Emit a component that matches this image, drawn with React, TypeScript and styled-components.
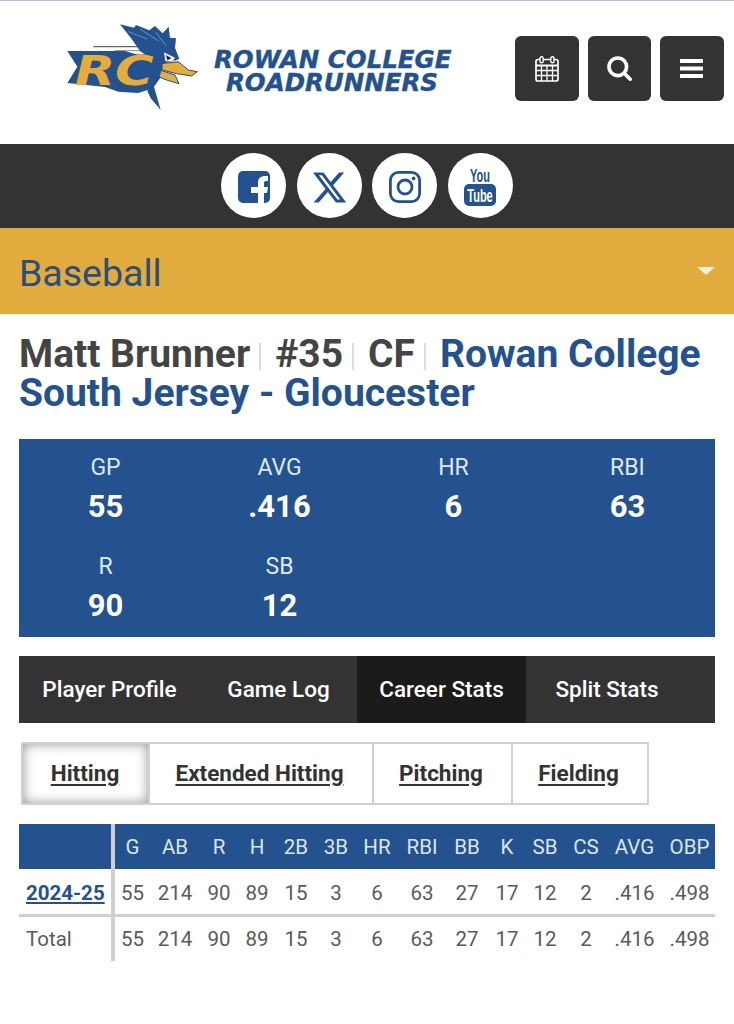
import styled, { createGlobalStyle } from "styled-components"
import { FaXTwitter } from "react-icons/fa6"

const BLUE = "#23528f"
const DARK = "#333333"

const GlobalStyle = createGlobalStyle`
  html, body {
    margin: 0;
    background: #fff;
    font-family: Roboto, "Liberation Sans", sans-serif;
  }
  * { box-sizing: border-box; }
`

const Page = styled.div`
  width: 734px;
  height: 1024px;
  overflow: hidden;
  border-top: 1px solid #b4bdc8;
`

const Header = styled.header`
  height: 143px;
  display: flex;
  align-items: flex-start;
`

const Brand = styled.div`
  display: flex;
  align-items: flex-start;
  margin: 14px 0 0 60px;
  width: 455px;
`

const WordMark = styled.div`
  margin: 33px 0 0 9px;
  width: 236px;
  text-align: center;
  color: ${BLUE};
  font-family: "DejaVu Sans", sans-serif;
  font-weight: 700;
  font-style: italic;
  font-size: 24.5px;
  line-height: 23px;
  white-space: nowrap;
  -webkit-text-stroke: 0.4px ${BLUE};
`

const HeaderButtons = styled.div`
  display: flex;
  gap: 9px;
  margin-top: 35px;
`

const SquareButton = styled.button`
  width: 63.6px;
  height: 65px;
  padding: 0;
  border: 0;
  border-radius: 6px;
  background: ${DARK};
  color: #fff;
  display: flex;
  align-items: center;
  justify-content: center;
`

const SocialBar = styled.div`
  height: 84px;
  background: ${DARK};
  display: flex;
  justify-content: center;
  align-items: flex-start;
  gap: 10.67px;
  padding-top: 9px;
`

const SocialLink = styled.a`
  width: 65px;
  height: 65px;
  padding-top: 3px;
  border-radius: 50%;
  background: #fff;
  color: ${BLUE};
  font-size: 37px;
  display: flex;
  align-items: center;
  justify-content: center;
`

const SportBar = styled.div`
  height: 86px;
  padding: 4px 19px 0;
  background: #e2ab3e;
  color: #2a4f7c;
  font-size: 37.5px;
  display: flex;
  align-items: center;
  justify-content: space-between;
`

const Caret = styled.span`
  width: 0;
  height: 0;
  margin-top: -4px;
  border-left: 9px solid transparent;
  border-right: 9px solid transparent;
  border-top: 8px solid #f5efe0;
`

const Content = styled.main`
  padding: 21px 19px 0;
`

const Title = styled.h1`
  margin: 0;
  font-size: 39px;
  line-height: 39px;
  font-weight: 700;
  color: #444;
`

const Pipe = styled.span`
  display: inline-block;
  width: 2px;
  height: 27px;
  margin: 0 14px 0 9px;
  background: #dcdcdc;
  vertical-align: -3px;
`

const School = styled.span`
  color: ${BLUE};
`

const StatBox = styled.section`
  margin-top: 26px;
  height: 198px;
  background: ${BLUE};
  display: grid;
  grid-template-columns: 173px 175px 173px 175px;
  grid-auto-rows: 99px;
  padding-top: 15px;
  color: #fff;
  text-align: center;
`

const StatLabel = styled.div`
  font-size: 23px;
  line-height: 27px;
  color: #dfe7f2;
`

const StatValue = styled.div`
  font-size: 31px;
  line-height: 40px;
  font-weight: 700;
  margin-top: 6px;
`

const Tabs = styled.nav`
  margin-top: 19px;
  height: 67px;
  background: ${DARK};
  display: flex;
`

const Tab = styled.a<{ $active?: boolean; $width: number }>`
  width: ${(p) => p.$width}px;
  padding-bottom: 2px;
  display: flex;
  align-items: center;
  justify-content: center;
  background: ${(p) => (p.$active ? "#1b1b1b" : "transparent")};
  color: #fff;
  font-size: 22.5px;
  font-weight: 500;
`

const SubTabs = styled.div`
  margin: 19px 0 0 2px;
  display: inline-flex;
  height: 63px;
  border: 2px solid #d0d0d0;
`

const SubTab = styled.a<{ $active?: boolean; $width: number }>`
  width: ${(p) => p.$width}px;
  padding: 0 ${(p) => (p.$active ? "1px" : "3px")} 2px 0;
  display: flex;
  align-items: center;
  justify-content: center;
  color: #333;
  font-size: 22.5px;
  font-weight: 700;
  text-decoration: underline;
  text-underline-offset: 3px;
  border-left: ${(p) => (p.$active ? "0" : "2px solid #d0d0d0")};
  box-shadow: ${(p) => (p.$active ? "inset 0 0 12px rgba(0, 0, 0, 0.42)" : "none")};
  &:first-child { border-left: 0; }
`

const StatsTable = styled.table`
  margin-top: 19px;
  width: 696px;
  border-collapse: collapse;
  table-layout: fixed;
  font-size: 20.5px;
  color: #5a5a5a;
  text-align: center;

  th {
    height: 45px;
    padding: 0;
    background: ${BLUE};
    color: #dbe6f3;
    font-weight: 400;
  }
  td {
    height: 46px;
    padding: 0;
  }
  tbody tr:first-child td {
    padding-top: 3px;
    border-bottom: 3px solid #d0d0d0;
  }
  th:first-child, td:first-child {
    border-right: 4px solid #cfcfcf;
    text-align: left;
    padding-left: 7px;
  }
  th:last-child, td:last-child {
    padding-left: 3px;
  }
`

const SeasonLink = styled.a`
  color: ${BLUE};
  font-weight: 700;
  text-decoration: underline;
`

function Logo() {
  return (
    <svg width="145" height="100" viewBox="0 0 435 300">
      <path d="M100 95 H235" stroke="#666" strokeWidth="4" />
      <path d="M165 107 H262 M190 118 H266" stroke="#888" strokeWidth="3" />
      <path d="M180 28 L222 38 L228 30 L268 46 L285 33 L308 55 L326 35 L330 68 L348 70 L345 98 L358 132 L335 140 L310 145 L300 190 L282 215 L302 285 L272 250 L262 228 L285 175 L285 140 L240 108 L215 72 Z" fill={BLUE} />
      <path d="M205 50 L262 72 M240 42 L296 78 M286 50 L318 92" stroke="#6c8fbe" strokeWidth="3" fill="none" />
      <path d="M312 112 L345 128 L338 140 L316 138 Z" fill="#f2f2f2" />
      <path d="M318 120 L334 130 L322 136 Z" fill="#222" />
      <path d="M306 146 L355 140 L385 165 L412 170 L395 183 L350 176 L306 165 Z" fill="#e5ab3c" stroke="#2f4f6f" strokeWidth="3" />
      <path d="M302 166 L345 180 L357 206 L322 196 L298 186 Z" fill="#d9b24f" stroke="#2f4f6f" strokeWidth="3" />
      <path d="M22 108 L195 108 L285 135 L297 175 L272 222 L235 234 L175 230 L135 216 L22 204 L52 155 Z" fill={BLUE} />
      <text transform="translate(44 210) scale(1.27 1)" fontFamily="DejaVu Sans" fontWeight="700" fontStyle="italic" fontSize="124" fill="#e5ab3c">RC</text>
    </svg>
  )
}

function CalendarIcon() {
  return (
    <svg width="24" height="26" viewBox="0 0 24 26" fill="none" stroke="#fff">
      <rect x="1" y="3.5" width="22" height="21.5" rx="2" strokeWidth="1.7" />
      <path d="M1 9.5 H23" strokeWidth="2" />
      <path d="M1 14.5 H23 M1 19.5 H23 M6.5 9.5 V25 M12 9.5 V25 M17.5 9.5 V25" strokeWidth="1.3" />
      <rect x="5" y="0.8" width="3.2" height="6" rx="1.6" fill={DARK} strokeWidth="1.4" />
      <rect x="15.8" y="0.8" width="3.2" height="6" rx="1.6" fill={DARK} strokeWidth="1.4" />
    </svg>
  )
}

function SearchIcon() {
  return (
    <svg width="25" height="25" viewBox="0 0 25 25" fill="none" stroke="#fff" strokeWidth="3.6">
      <circle cx="10.8" cy="10.8" r="8.8" />
      <path d="M17.5 17.5 L23.2 23.2" strokeLinecap="round" />
    </svg>
  )
}

function BarsIcon() {
  return (
    <svg width="23" height="19" viewBox="0 0 23 19" fill="#fff">
      <rect width="23" height="4" rx="0.5" />
      <rect y="7.5" width="23" height="4" rx="0.5" />
      <rect y="15" width="23" height="4" rx="0.5" />
    </svg>
  )
}

function FacebookIcon() {
  return (
    <svg width="32" height="32" viewBox="0 0 32 32">
      <rect width="32" height="32" rx="5" fill={BLUE} />
      <path d="M20 32 V22 H13 V16 H20 V12 C20 7 23 5 27 5 H30 V10 H28 C26.5 10 26 11 26 12 V16 H30 L29 22 H26 V32 Z" fill="#fff" />
    </svg>
  )
}

function InstagramIcon() {
  return (
    <svg width="32" height="32" viewBox="0 0 32 32" fill="none" stroke={BLUE} strokeWidth="2.8">
      <rect x="1.4" y="1.4" width="29.2" height="29.2" rx="8" />
      <circle cx="16" cy="16" r="7" />
      <circle cx="24.6" cy="7.4" r="1.9" fill={BLUE} stroke="none" />
    </svg>
  )
}

function YoutubeIcon() {
  return (
    <svg width="32" height="46" viewBox="0 -4 32 46" fontFamily="Liberation Sans" fontWeight="700" textAnchor="middle">
      <text transform="translate(16 14) scale(0.58 1)" fontSize="19" fill={BLUE}>You</text>
      <rect y="16" width="32" height="22" rx="5" fill={BLUE} />
      <text transform="translate(16 33.5) scale(0.58 1)" fontSize="19" fill="#fff">Tube</text>
    </svg>
  )
}

const columns = ["G", "AB", "R", "H", "2B", "3B", "HR", "RBI", "BB", "K", "SB", "CS", "AVG", "OBP"]
const values = ["55", "214", "90", "89", "15", "3", "6", "63", "27", "17", "12", "2", ".416", ".498"]
const widths = [37, 50, 38, 38, 40, 40, 42, 48, 42, 38, 38, 44, 53, 54]

const stats = [
  ["GP", "55"],
  ["AVG", ".416"],
  ["HR", "6"],
  ["RBI", "63"],
  ["R", "90"],
  ["SB", "12"],
]

export default function App() {
  return (
    <Page>
      <GlobalStyle />
      <Header>
        <Brand>
          <Logo />
          <WordMark>
            ROWAN COLLEGE
            <br />
            ROADRUNNERS
          </WordMark>
        </Brand>
        <HeaderButtons>
          <SquareButton><CalendarIcon /></SquareButton>
          <SquareButton><SearchIcon /></SquareButton>
          <SquareButton><BarsIcon /></SquareButton>
        </HeaderButtons>
      </Header>
      <SocialBar>
        <SocialLink><FacebookIcon /></SocialLink>
        <SocialLink><FaXTwitter /></SocialLink>
        <SocialLink><InstagramIcon /></SocialLink>
        <SocialLink><YoutubeIcon /></SocialLink>
      </SocialBar>
      <SportBar>
        Baseball
        <Caret />
      </SportBar>
      <Content>
        <Title>
          Matt Brunner<Pipe />#35<Pipe />CF<Pipe />
          <School>Rowan College South Jersey - Gloucester</School>
        </Title>
        <StatBox>
          {stats.map(([label, value]) => (
            <div key={label}>
              <StatLabel>{label}</StatLabel>
              <StatValue>{value}</StatValue>
            </div>
          ))}
        </StatBox>
        <Tabs>
          <Tab $width={181}>Player Profile</Tab>
          <Tab $width={157}>Game Log</Tab>
          <Tab $width={169} $active>Career Stats</Tab>
          <Tab $width={162}>Split Stats</Tab>
        </Tabs>
        <SubTabs>
          <SubTab $width={125} $active>Hitting</SubTab>
          <SubTab $width={224}>Extended Hitting</SubTab>
          <SubTab $width={139}>Pitching</SubTab>
          <SubTab $width={136}>Fielding</SubTab>
        </SubTabs>
        <StatsTable>
          <colgroup>
            <col style={{ width: 94 }} />
            {widths.map((w, i) => (
              <col key={i} style={{ width: w }} />
            ))}
          </colgroup>
          <thead>
            <tr>
              <th />
              {columns.map((c) => <th key={c}>{c}</th>)}
            </tr>
          </thead>
          <tbody>
            <tr>
              <td><SeasonLink>2024-25</SeasonLink></td>
              {values.map((v, i) => <td key={i}>{v}</td>)}
            </tr>
            <tr>
              <td>Total</td>
              {values.map((v, i) => <td key={i}>{v}</td>)}
            </tr>
          </tbody>
        </StatsTable>
      </Content>
    </Page>
  )
}
